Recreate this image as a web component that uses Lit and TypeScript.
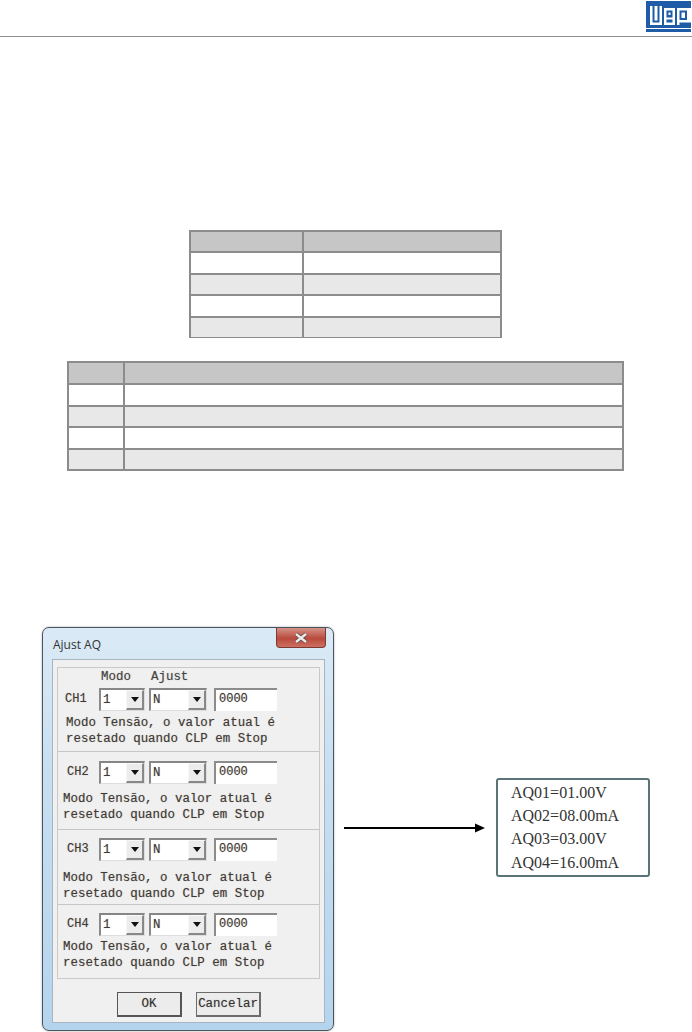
import { LitElement, html, css } from "lit";
import { customElement } from "lit/decorators.js";

const rows = [
  { pad: "s1", label: "CH1" },
  { pad: "s2", label: "CH2" },
  { pad: "s3", label: "CH3" },
  { pad: "s4", label: "CH4" },
];

@customElement("app-root")
export class AppRoot extends LitElement {
  static styles = css`
    :host { display: block; width: 692px; height: 1032px; overflow: hidden; background: #fff; font-family: "Liberation Mono", monospace; }
    .head { height: 36px; display: flex; justify-content: flex-end; align-items: flex-start; border-bottom: 1px solid #8f8f8f; }
    .logo { display: block; margin: 1px 1px 0 0; }
    .t { display: grid; border: 2px solid #8c8c8c; background: #8c8c8c; gap: 2px; box-sizing: border-box; }
    .t div { background: #fff; }
    .t .h { background: #c6c6c6; }
    .t .z { background: #e8e8e8; }
    .t1 { width: 313px; height: 108px; margin: 193px 0 0 189px; grid-template-columns: 111px 1fr; grid-template-rows: 19px repeat(4, 19.5px); }
    .t2 { width: 557px; height: 110px; margin: 23px 0 0 67px; grid-template-columns: 54px 1fr; grid-template-rows: 20px repeat(4, 19.5px); }
    .low { display: flex; align-items: flex-start; margin-top: 156px; }
    .win { margin-left: 42px; width: 292px; height: 404px; box-sizing: border-box; flex: none; border: 1px solid #4a5560; border-radius: 7px; box-shadow: 0 0 2px #9a9a9a; background: linear-gradient(180deg, #dbeaf6 0, #c8dff0 35%, #b4d4ee 100%); padding: 0 8px 7px 9px; display: flex; flex-direction: column; }
    .tb { height: 31px; flex: none; display: flex; justify-content: space-between; align-items: flex-start; }
    .ttl { font: 12px "Open Sans", "Liberation Sans", sans-serif; color: #333; margin: 8px 0 0 1px; }
    .x { width: 50px; height: 20px; margin-right: -1px; box-sizing: border-box; border: 1px solid #7c3a32; border-top: 0; border-radius: 0 0 4px 4px; background: linear-gradient(180deg, #d49488 0, #b94a3c 55%, #cc7062 100%); display: flex; align-items: center; justify-content: center; }
    .pan { flex: 1; background: #f0f0f0; border: 1px solid #a8b4bf; padding: 7px 4px 0 4px; display: flex; flex-direction: column; }
    .grp { border: 1px solid #c9c9c9; height: 312px; flex: none; box-sizing: border-box; display: flex; flex-direction: column; color: #3f3a36; font-size: 12.45px; line-height: 16px; text-shadow: 0 0 1px rgba(90, 70, 60, .45); }
    .sec { border-bottom: 1px solid #c5c5c5; box-sizing: border-box; padding-left: 5px; }
    .sec:last-child { border-bottom: 0; }
    .s1 { height: 84px; padding-top: 1px; }
    .s2 { height: 78px; padding-top: 8px; }
    .s3 { height: 75px; padding-top: 7px; }
    .s4 { height: 73px; padding-top: 7px; }
    .caps { display: flex; height: 16px; margin-bottom: 2px; color: #444; }
    .caps span:first-child { margin-left: 38px; width: 50px; }
    .ctl { display: flex; align-items: center; height: 24px; }
    .lab { width: 32px; margin-left: 4px; font-size: 12px; }
    .s1 .lab { margin-left: 2px; width: 34px; }
    .pick { height: 23px; box-sizing: border-box; background: #fff; border: 1px solid #a0a0a0; border-top: 2px solid #868686; border-left: 2px solid #8a8a8a; border-right-color: #ddd; border-bottom-color: #ddd; display: flex; align-items: center; justify-content: space-between; padding-left: 2px; }
    .p1 { width: 46px; margin-right: 4px; }
    .p2 { width: 58px; margin-right: 7px; }
    .arr { width: 18px; height: 20px; background: #ececec; border: 1px solid; border-color: #f8f8f8 #888 #888 #f8f8f8; border-right-width: 2px; border-bottom-width: 2px; box-sizing: border-box; display: flex; align-items: center; justify-content: center; }
    .arr i { display: block; border: 4px solid transparent; border-top: 5px solid #111; border-bottom: 0; }
    .inp { width: 63px; height: 23px; box-sizing: border-box; background: #fff; border-top: 2px solid #8c8c8c; border-left: 2px solid #8c8c8c; padding-left: 3px; line-height: 19px; font-size: 12px; }
    .desc { margin: 7px 0 0 0; white-space: pre; }
    .s1 .desc { margin: 4px 0 0 3px; }
    .s3 .desc { margin-top: 9px; }
    .s4 .desc { margin-top: 3px; }
    .btns { display: flex; gap: 14px; justify-content: center; margin-top: 13px; padding-left: 1px; }
    .btn { height: 25px; box-sizing: border-box; background: #ececec; border: 1px solid #6c6c6c; border-right-width: 2px; border-bottom-width: 2px; color: #333; font-size: 12.45px; text-shadow: 0 0 1px rgba(90, 70, 60, .45); display: flex; align-items: center; justify-content: center; }
    .b1 { width: 65px; border-color: #555; }
    .b2 { width: 65px; }
    .arrow { flex: none; margin: 195px 0 0 10px; display: block; }
    .lcd { flex: none; margin: 151px 0 0 11px; width: 154px; height: 99px; box-sizing: border-box; border: 2px solid #5a7478; border-radius: 3px; padding: 1px 0 0 13px; font: 16px/23.2px "Liberation Serif", serif; color: #333; }
    .lcd div { white-space: pre; }
  `;

  private row(r: { pad: string; label: string }) {
    return html`<div class="sec ${r.pad}">
      ${r.pad === "s1" ? html`<div class="caps"><span>Modo</span><span>Ajust</span></div>` : html``}
      <div class="ctl">
        <span class="lab">${r.label}</span>
        <div class="pick p1"><span>1</span><span class="arr"><i></i></span></div>
        <div class="pick p2"><span>N</span><span class="arr"><i></i></span></div>
        <div class="inp">0000</div>
      </div>
      <div class="desc">Modo Tensão, o valor atual é
resetado quando CLP em Stop</div>
    </div>`;
  }

  render() {
    const cells = (n: number) => Array.from({ length: n }, (_, i) => {
      const r = Math.floor(i / 2);
      return html`<div class=${r === 0 ? "h" : r % 2 === 0 ? "z" : ""}></div>`;
    });
    return html`
      <div class="head">
        <svg class="logo" width="45" height="31" viewBox="0 0 45 31" aria-label="WEG">
          <rect width="45" height="27" fill="#1f5ca8"/>
          <rect y="28" width="45" height="3" fill="#1f5ca8"/>
          <path d="M4 5H16V24H4ZM18 7H29V24H18ZM31 7H45V24H31Z" fill="#fff"/>
          <path d="M6.500 5H8.500V21.500H6.500ZM11.500 5H13.500V21.500H11.500ZM6.500 19.500H13.500V21.500H6.500ZM20.500 9.500H26.500V16.500H20.500V18.500H26.500V21.500H20.500ZM33.500 9.500H41V19H33.500ZM33.500 21.500H45V24H33.500Z" fill="#1f5ca8"/>
          <path d="M22.500 11.500H24.500V14H22.500ZM35.500 11.500H39V17H35.500Z" fill="#fff"/>
        </svg>
      </div>
      <div class="t t1">${cells(10)}</div>
      <div class="t t2">${cells(10)}</div>
      <div class="low">
        <div class="win">
          <div class="tb">
            <span class="ttl">Ajust AQ</span>
            <span class="x"><svg width="16" height="12" viewBox="0 0 16 12"><path d="M3 2L13 10M13 2L3 10" stroke="#5a4a48" stroke-width="4" fill="none"/><path d="M3 2L13 10M13 2L3 10" stroke="#eceaea" stroke-width="2.4" fill="none"/></svg></span>
          </div>
          <div class="pan">
            <div class="grp">${rows.map((r) => this.row(r))}</div>
            <div class="btns"><div class="btn b1">OK</div><div class="btn b2">Cancelar</div></div>
          </div>
        </div>
        <svg class="arrow" width="141" height="12" viewBox="0 0 141 12"><path d="M0 6H132" stroke="#000" stroke-width="2"/><path d="M131 1.500L141 6L131 10.500Z" fill="#000"/></svg>
        <div class="lcd">
          <div>AQ01=01.00V</div>
          <div>AQ02=08.00mA</div>
          <div>AQ03=03.00V</div>
          <div>AQ04=16.00mA</div>
        </div>
      </div>
    `;
  }
}
